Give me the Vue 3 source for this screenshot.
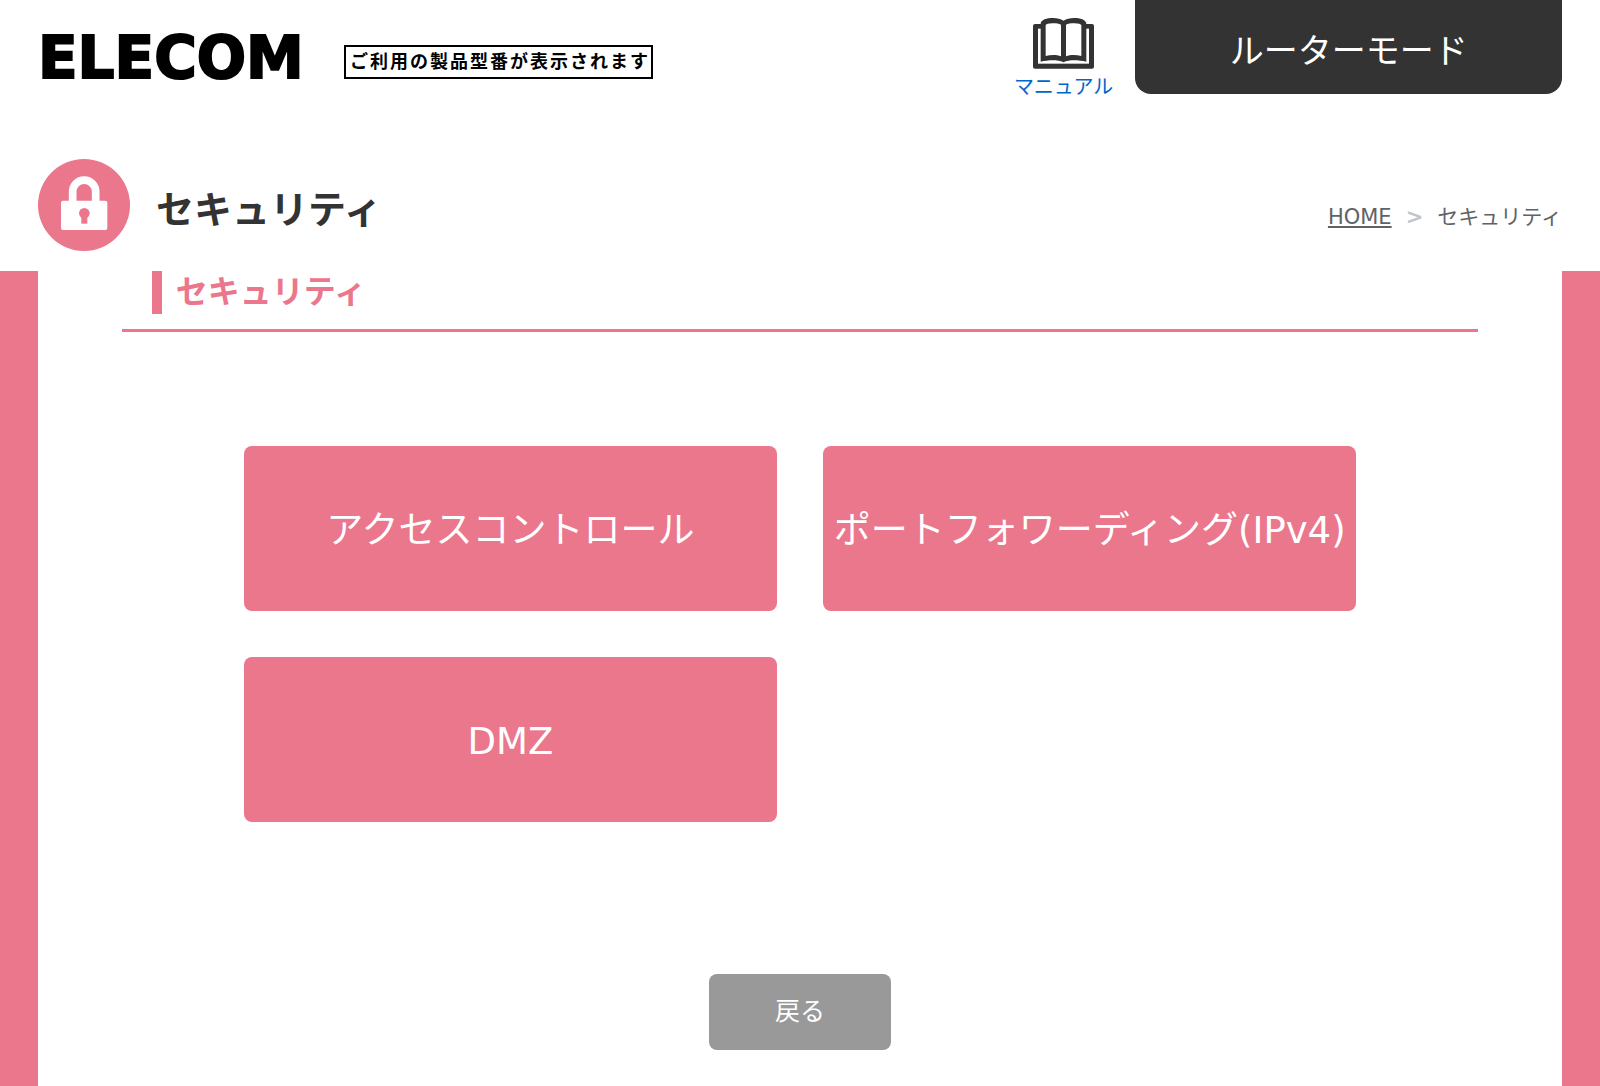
<script setup>
import { ref } from 'vue'

const menus = ref([
  { id: 'access', label: 'アクセスコントロール' },
  { id: 'port', label: 'ポートフォワーディング(IPv4)' },
  { id: 'dmz', label: 'DMZ' }
])
</script>

<template>
  <div class="page">
    <header class="header">
      <div class="logo">ELECOM</div>
      <div class="model">ご利用の製品型番が表示されます</div>
      <a class="manual" href="#manual">
        <svg class="manual-icon" viewBox="0 0 183 153" aria-hidden="true">
          <rect y="18" width="183" height="134" rx="6" fill="#333" />
          <rect x="15" y="32" width="153" height="105" fill="#fff" />
          <path d="M23 18C23 5 42 0 60 0c13 0 23 3 31.500 8C100 3 110 0 123 0c18 0 37 5 37 18v113c-24-5-50-7-68.500 2C73 124 47 126 23 131z" fill="#333" />
          <path d="M38 22c0-6 32-9 46-2v95c-14-6-32-5-46-1zM99 20c14-7 46-4 46 2v92c-14-4-32-5-46 1z" fill="#fff" />
        </svg>
        <span>マニュアル</span>
      </a>
      <div class="mode">ルーターモード</div>
    </header>

    <div class="title-row">
      <svg class="title-icon" viewBox="0 0 276 276" aria-hidden="true">
        <circle cx="138" cy="138" r="138" fill="#eb778c" />
        <path d="M104 130V98a34.500 34.500 0 0 1 69 0v32" fill="none" stroke="#fff" stroke-width="23" />
        <rect x="69" y="125" width="139" height="88" rx="6" fill="#fff" />
        <circle cx="139" cy="163" r="16" fill="#eb778c" />
        <rect x="130" y="166" width="18" height="28" fill="#eb778c" />
      </svg>
      <h1>セキュリティ</h1>
      <nav class="breadcrumb">
        <a href="#home">HOME</a>
        <span class="separator">&gt;</span>
        <span>セキュリティ</span>
      </nav>
    </div>

    <main class="content">
      <h2>セキュリティ</h2>
      <div class="menu">
        <button v-for="menu in menus" :key="menu.id" type="button" class="menu-button">
          {{ menu.label }}
        </button>
      </div>
      <button type="button" class="back-button">戻る</button>
    </main>
  </div>
</template>

<style>
body {
  margin: 0;
  background: #fff;
}
</style>

<style scoped>
.page {
  display: flex;
  flex-direction: column;
  min-height: 100vh;
  font-family: "DejaVu Sans", "Noto Sans CJK JP", sans-serif;
  color: #333;
}

.header {
  display: flex;
  align-items: flex-start;
  padding: 0 38px;
}

.logo {
  width: 274px;
  margin-top: 28px;
  font-size: 58px;
  line-height: 60px;
  font-weight: bold;
  color: #000;
  -webkit-text-stroke: 2px #000;
}

.model {
  margin: 45px 0 0 32px;
  padding: 0 1px 0 4px;
  border: 2px solid #000;
  font-size: 18px;
  line-height: 30px;
  font-weight: bold;
  letter-spacing: 2px;
  color: #000;
  white-space: nowrap;
}

.manual {
  display: flex;
  flex-direction: column;
  align-items: center;
  margin: 18px 22px 0 auto;
  font-size: 20px;
  line-height: 36px;
  color: #0066cc;
  text-decoration: none;
  white-space: nowrap;
}

.manual-icon {
  width: 61px;
  height: 51px;
}

.mode {
  box-sizing: border-box;
  width: 28%;
  padding: 20px 0 12px;
  border-radius: 0 0 16px 16px;
  background: #333;
  font-size: 34px;
  line-height: 62px;
  text-align: center;
  color: #fff;
}

.title-row {
  display: flex;
  align-items: center;
  padding: 54px 38px 20px;
}

.title-icon {
  width: 92px;
  height: 92px;
}

h1 {
  margin: 10px 0 0 26px;
  font-size: 38px;
  line-height: 56px;
  font-weight: bold;
}

.breadcrumb {
  display: flex;
  gap: 14px;
  margin: 24px 0 0 auto;
  font-size: 21px;
  line-height: 32px;
  color: #606266;
}

.breadcrumb a {
  color: #606266;
}

.separator {
  font-weight: bold;
  color: #c0c4cc;
}

.content {
  display: flex;
  flex: 1;
  flex-direction: column;
  align-items: center;
  border: solid #eb778c;
  border-width: 0 38px;
}

h2 {
  box-sizing: border-box;
  width: 89%;
  margin: 0;
  padding: 0 0 15px 30px;
  border-bottom: 3px solid #eb778c;
  font-size: 32px;
  line-height: 43px;
  font-weight: bold;
  color: #eb778c;
}

h2::before {
  content: "";
  display: inline-block;
  width: 10px;
  height: 43px;
  margin-right: 14px;
  background: #eb778c;
  vertical-align: top;
}

.menu {
  display: grid;
  grid-template-columns: 1fr 1fr;
  gap: 46px;
  width: 73%;
  margin-top: 114px;
}

.menu-button,
.back-button {
  border: none;
  border-radius: 8px;
  padding: 0;
  font-family: inherit;
  color: #fff;
  cursor: pointer;
}

.menu-button {
  height: 165px;
  padding-top: 4px;
  background: #eb778c;
  font-size: 37px;
  line-height: 56px;
  white-space: nowrap;
}

.back-button {
  width: 12%;
  height: 76px;
  margin: 152px 0 36px;
  background: #999;
  font-size: 25px;
  line-height: 36px;
}
</style>
